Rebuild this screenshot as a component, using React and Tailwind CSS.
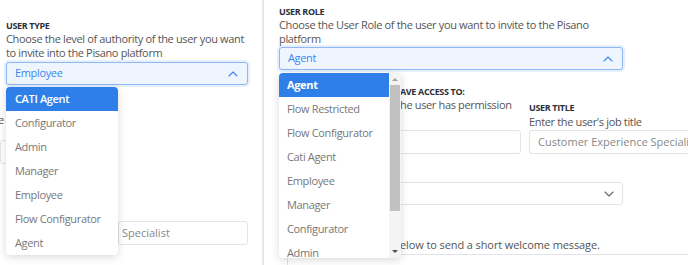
import React from 'react';

const font = { fontFamily: '"Open Sans", "Liberation Sans", sans-serif' };

const Chevron = ({ up }) => (
  <svg width="10" height="6" viewBox="0 0 10 6" fill="none" className={up ? 'text-[#3d86f0]' : 'text-[#666]'}>
    <path d={up ? 'M1 5L5 1L9 5' : 'M1 1L5 5L9 1'} stroke="currentColor" strokeWidth="1.1" strokeLinecap="round" strokeLinejoin="round" />
  </svg>
);

const typeOptions = ['CATI Agent', 'Configurator', 'Admin', 'Manager', 'Employee', 'Flow Configurator', 'Agent'];
const roleOptions = ['Agent', 'Flow Restricted', 'Flow Configurator', 'Cati Agent', 'Employee', 'Manager', 'Configurator', 'Admin', 'Viewer'];

const Label = ({ children }) => (
  <div className="text-[9px] font-bold uppercase leading-[12px] text-[#2b2f3a]">{children}</div>
);

const OpenSelect = ({ value }) => (
  <div className="flex h-[23px] items-center justify-between rounded-[3px] border border-[#8db8f3] bg-[#eef5fe] pl-[8px] pr-[9px] text-[11px] text-[#3d86f0] shadow-[0_0_0_2px_#e6effc]">
    <span>{value}</span>
    <Chevron up />
  </div>
);

const UserTypePanel = () => (
  <div className="relative w-[264px] shrink-0 border-r-2 border-[#e6e6ef] pl-[6px] pr-[14px] pt-[20px] tracking-[-0.35px]">
    <Label>User Type</Label>
    <p className="mt-0 text-[11px] leading-[14px] text-[#555]">
      Choose the level of authority of the user you want to invite into the Pisano platform
    </p>
    <div className="mt-[2px]">
      <OpenSelect value="Employee" />
    </div>
    {/* form content behind the menu */}
    <div className="-ml-[8px] mt-[28px] text-[11px] leading-[14px] text-[#555]">e t</div>
    <div className="-ml-[6px] mt-[13px] h-[24px] w-[100px] rounded-[3px] border border-[#e3e3ea]" />
    <div className="ml-[112px] mt-[57px] flex h-[24px] items-center rounded-[3px] border border-[#e3e3ea] pl-[3px] text-[11px] tracking-normal text-[#888]">
      Specialist
    </div>

    <div className="absolute left-[6px] top-[87px] w-[112px] overflow-hidden rounded-[4px] bg-white shadow-[0_2px_8px_rgba(0,0,0,0.15)]">
      {typeOptions.map((o, i) => (
        <div
          key={o}
          className={
            i === 0
              ? 'flex h-[24px] items-center bg-[#2e7fe8] pl-[9px] text-[11px] font-semibold text-white'
              : 'flex h-[24px] items-center pl-[9px] text-[11px] text-[#777]'
          }
        >
          {o}
        </div>
      ))}
    </div>
  </div>
);

const UserRolePanel = () => (
  <div className="relative flex-1 pl-[15px] pt-[6px] tracking-[-0.35px]">
    <Label>User Role</Label>
    <p className="mt-0 w-[330px] text-[11px] leading-[14px] text-[#555]">
      Choose the User Role of the user you want to invite to the Pisano platform
    </p>
    <div className="mt-[1px] w-[344px]">
      <OpenSelect value="Agent" />
    </div>

    {/* form content behind the menu */}
    <div className="mt-[16px] flex items-end gap-[8px]">
      <div className="w-[242px]">
        <div className="pl-[121px]">
          <Label>Ave access to:</Label>
          <div className="text-[11px] leading-[14px] text-[#555]">he user has permission</div>
          <div className="h-[14px]" />
        </div>
        <div className="mt-[4px] h-[24px] rounded-[3px] border border-[#e3e3ea]" />
      </div>
      <div className="flex-1">
        <Label>User Title</Label>
        <div className="mt-[1px] text-[11px] leading-[14px] text-[#555]">Enter the user's job title</div>
        <div className="mt-[1px] flex h-[24px] items-center overflow-hidden whitespace-nowrap rounded-l-[3px] border border-r-0 border-[#e3e3ea] pl-[8px] text-[11px] tracking-normal text-[#888]">
          Customer Experience Specialist
        </div>
      </div>
    </div>
    <div className="mt-[28px] flex h-[23px] w-[344px] items-center justify-end rounded-[3px] border border-[#e3e3ea] pr-[8px]">
      <Chevron />
    </div>
    <div className="mt-[33px] pl-[121px] text-[11px] leading-[14px] tracking-[-0.1px] text-[#555]">
      elow to send a short welcome message.
    </div>
    <div className="ml-[8px] mt-[2px] h-[20px] rounded-tl-[3px] border-l border-t border-[#e3e3ea]" />

    <div className="absolute left-[15px] top-[73px] flex h-[185px] w-[122px] overflow-hidden rounded-[4px] bg-white shadow-[0_2px_8px_rgba(0,0,0,0.15)]">
      <div className="w-[110px]">
        {roleOptions.map((o, i) => (
          <div
            key={o}
            className={
              i === 0
                ? 'flex h-[24px] items-center bg-[#2e7fe8] pl-[8px] text-[11px] font-bold text-white'
                : 'flex h-[24px] items-center pl-[8px] text-[11px] text-[#777]'
            }
          >
            {o}
          </div>
        ))}
      </div>
      <div className="flex w-[12px] flex-col items-center bg-[#f4f4f4]">
        <svg width="6" height="12" viewBox="0 0 6 12" className="shrink-0">
          <path d="M0 8L3 5L6 8Z" fill="#a3a3a3" />
        </svg>
        <div className="h-[126px] w-[10px] bg-[#c1c1c1]" />
        <div className="flex-1" />
        <svg width="6" height="12" viewBox="0 0 6 12" className="shrink-0">
          <path d="M0 4L3 7L6 4Z" fill="#505050" />
        </svg>
      </div>
    </div>
  </div>
);

export default function App() {
  return (
    <div className="flex h-[265px] w-[688px] overflow-hidden bg-white" style={font}>
      <UserTypePanel />
      <UserRolePanel />
    </div>
  );
}
